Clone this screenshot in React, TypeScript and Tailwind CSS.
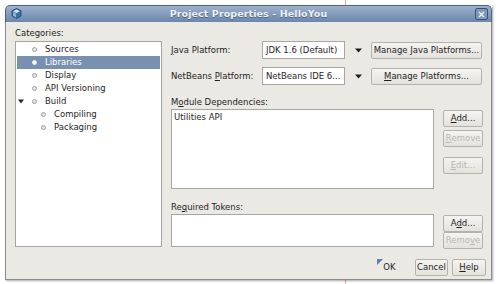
import React from 'react';

const font = "font-['DejaVu_Sans','Liberation_Sans',sans-serif]";

function U({ children }: { children: React.ReactNode }) {
  return <span className="underline underline-offset-[1px] decoration-[0.5px]">{children}</span>;
}

function Btn({
  children,
  className = '',
  disabled = false,
}: {
  children: React.ReactNode;
  className?: string;
  disabled?: boolean;
}) {
  return (
    <div
      className={`flex h-[17px] items-center justify-center rounded-[2px] border border-[#b4b2ac] bg-gradient-to-b from-[#f5f4f1] to-[#e4e2dd] text-[8.5px] ${
        disabled ? 'text-[#b9b7b1]' : 'text-[#1e1e1e]'
      } ${className}`}
    >
      {children}
    </div>
  );
}

function Bullet({ selected = false }: { selected?: boolean }) {
  return (
    <span
      className={`inline-block h-[5px] w-[5px] rounded-full border ${
        selected ? 'border-[#e6ecf4] bg-white' : 'border-[#a3a3a3] bg-[#e4e4e4]'
      }`}
    />
  );
}

function TreeRow({
  label,
  indent = 0,
  selected = false,
  expander = false,
}: {
  label: string;
  indent?: number;
  selected?: boolean;
  expander?: boolean;
}) {
  return (
    <div
      className={`flex h-[13px] items-center ${selected ? 'bg-[#7990b0] text-white' : 'text-[#1e1e1e]'}`}
    >
      <div className="flex w-[15px] justify-start pl-[1px]">
        {expander && (
          <svg width="6" height="5" viewBox="0 0 6 5">
            <path d="M0 0.5 L6 0.5 L3 4.5 Z" fill="#2a2a2a" />
          </svg>
        )}
      </div>
      <div className={indent ? 'w-[9px]' : 'w-0'} />
      <div className="flex w-[13px] items-center">
        <Bullet selected={selected} />
      </div>
      <span className="text-[8.5px] leading-none">{label}</span>
    </div>
  );
}

function Combo({ text }: { text: string }) {
  return (
    <div className="flex items-center">
      <div className="flex h-[18px] w-[83px] items-center border border-[#a8a6a0] bg-white pl-[3px] text-[8.5px] text-[#1e1e1e]">
        {text}
      </div>
      <div className="flex w-[26px] justify-center">
        <svg width="7" height="5" viewBox="0 0 7 5">
          <path d="M0 0.5 L7 0.5 L3.5 4.5 Z" fill="#1e1e1e" />
        </svg>
      </div>
    </div>
  );
}

export default function App() {
  return (
    <div className={`relative h-[284px] w-[500px] overflow-hidden bg-white ${font}`}>
      <div className="absolute left-[345px] top-0 h-full w-px bg-[#e9a9b0]" />

      <div className="absolute left-[5px] top-[5px] flex h-[275px] w-[487px] flex-col shadow-[1px_1px_2px_rgba(0,0,0,0.35)]">
        {/* title bar */}
        <div className="relative flex h-[17px] items-center justify-center rounded-t-[5px] border border-b-0 border-[#4f6583] bg-gradient-to-b from-[#9db1cb] to-[#6b87ab]">
          <svg className="absolute left-[5px] top-[2px]" width="11" height="11" viewBox="0 0 11 11">
            <path d="M5.5 0.5 L10 2.8 L10 8 L5.5 10.5 L1 8 L1 2.8 Z" fill="#3a6fb0" stroke="#1f3e66" strokeWidth="0.8" />
            <path d="M5.5 1.5 L9 3.2 L5.5 5 L2 3.2 Z" fill="#d9e6f5" />
            <path d="M2 4 L5 5.6 L5 9.4 L2 7.7 Z" fill="#8fb4e0" />
          </svg>
          <span className="text-[9.5px] font-bold tracking-[0.1px] text-[#eef2f7] [text-shadow:0_1px_0_#4a6283]">
            Project Properties - HelloYou
          </span>
          <div className="absolute right-[3px] top-[2px] flex h-[12px] w-[13px] items-center justify-center rounded-[2px] border border-[#3e5272] bg-[#7f98b9]">
            <svg width="7" height="7" viewBox="0 0 7 7">
              <path d="M1 1 L6 6 M6 1 L1 6" stroke="#eef2f7" strokeWidth="1.4" />
            </svg>
          </div>
        </div>

        {/* body */}
        <div className="flex flex-1 flex-col border border-t-0 border-[#8d8c88] bg-[#ebe9e4]">
          <div className="flex pl-[9px]">
            {/* categories */}
            <div className="flex w-[147px] flex-col">
              <div className="mt-[5px] h-[13px] text-[8.5px] leading-[13px] text-[#1e1e1e]">Categories:</div>
              <div className="mt-[1px] h-[206px] border border-[#a5a39e] bg-white pt-[1px] pl-[1px] pr-[1px]">
                <TreeRow label="Sources" />
                <TreeRow label="Libraries" selected />
                <TreeRow label="Display" />
                <TreeRow label="API Versioning" />
                <TreeRow label="Build" expander />
                <TreeRow label="Compiling" indent={1} />
                <TreeRow label="Packaging" indent={1} />
              </div>
            </div>

            {/* settings */}
            <div className="ml-[9px] flex w-[312px] flex-col pt-[19px] text-[8.5px] text-[#1e1e1e]">
              <div className="flex h-[18px] items-center">
                <div className="w-[91px]">
                  <U>J</U>ava Platform:
                </div>
                <Combo text="JDK 1.6 (Default)" />
                <Btn className="w-[111px]">
                  Mana<U>g</U>e Java Platforms...
                </Btn>
              </div>
              <div className="mt-[8px] flex h-[18px] items-center">
                <div className="w-[91px]">
                  NetBeans <U>P</U>latform:
                </div>
                <Combo text="NetBeans IDE 6..." />
                <Btn className="w-[111px]">
                  <U>M</U>anage Platforms...
                </Btn>
              </div>

              <div className="mt-[11px] h-[13px] leading-[13px]">
                M<U>o</U>dule Dependencies:
              </div>
              <div className="flex">
                <div className="h-[80px] w-[263px] border border-[#a8a6a0] bg-white px-[2px] pt-[2px] leading-[11px]">
                  Utilities API
                </div>
                <div className="ml-[9px] flex w-[40px] flex-col pt-[1px]">
                  <Btn>
                    <U>A</U>dd...
                  </Btn>
                  <Btn disabled className="mt-[3px]">
                    <U>R</U>emove
                  </Btn>
                  <Btn disabled className="mt-[10px]">
                    <U>E</U>dit...
                  </Btn>
                </div>
              </div>

              <div className="mt-[12px] h-[13px] leading-[13px]">
                Re<U>q</U>uired Tokens:
              </div>
              <div className="flex">
                <div className="h-[33px] w-[263px] border border-[#a8a6a0] bg-white" />
                <div className="ml-[9px] flex w-[40px] flex-col pt-[1px]">
                  <Btn>
                    A<U>d</U>d...
                  </Btn>
                  <Btn disabled className="mt-[0px]">
                    Remo<U>v</U>e
                  </Btn>
                </div>
              </div>
            </div>
          </div>

          {/* dialog buttons */}
          <div className="mt-[10px] flex justify-end pr-[5px] text-[8.5px] text-[#1e1e1e]">
            <div className="relative flex h-[17px] w-[25px] items-center justify-center">
              <svg className="absolute left-0 top-0" width="6" height="6" viewBox="0 0 6 6">
                <path d="M0 0 L6 0 L0 6 Z" fill="#5f7fae" />
              </svg>
              OK
            </div>
            <Btn className="ml-[13px] w-[33px]">Cancel</Btn>
            <Btn className="ml-[4px] w-[34px]">
              <U>H</U>elp
            </Btn>
          </div>
        </div>
      </div>
    </div>
  );
}
